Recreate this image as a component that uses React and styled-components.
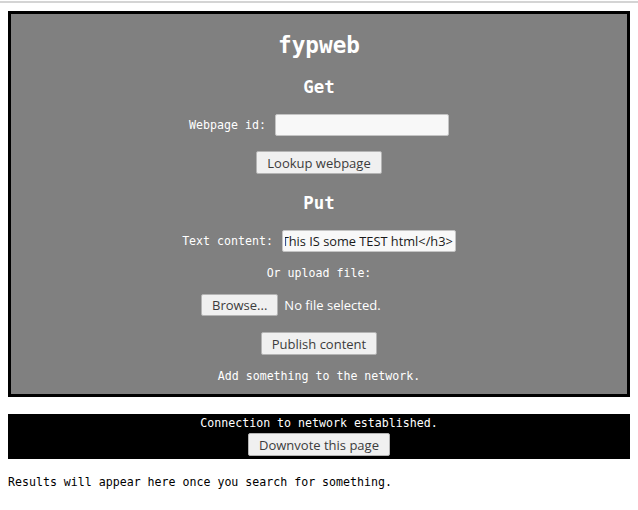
import React, { useEffect, useRef } from 'react';
import styled, { createGlobalStyle } from 'styled-components';

const GlobalStyle = createGlobalStyle`
    html, body {
        margin: 0;
        padding: 0;
        background: #fff;
    }
    body {
        font-family: "DejaVu Sans Mono", monospace;
        font-size: 11.6px;
        color: #000;
    }
`;

const TopRule = styled.div`
    margin-top: 1px;
    height: 2px;
    background: #d4d4d4;
`;

const Page = styled.div`
    padding: 8px 8px 0;
`;

const Panel = styled.div`
    border: 3px solid #000;
    background: #808080;
    color: #fff;
    display: flex;
    flex-direction: column;
    align-items: center;
    padding: 17px 0 11px;
`;

const Title = styled.h1`
    margin: 0;
    font-size: 22.7px;
    line-height: 28px;
    font-weight: bold;
`;

const Subtitle = styled.h2`
    margin: ${p => p.$top}px 0 0;
    font-size: 17.4px;
    line-height: 22px;
    font-weight: bold;
`;

const Row = styled.div`
    display: flex;
    align-items: center;
    gap: ${p => p.$gap || 9}px;
    margin-top: ${p => p.$top}px;
    height: 22px;
`;

const FileRow = styled(Row)`
    width: 236px;
    justify-content: flex-start;
`;

const Label = styled.span`
    line-height: 14px;
`;

const Line = styled.div`
    margin-top: ${p => p.$top}px;
    line-height: 14px;
`;

const TextInput = styled.input`
    box-sizing: border-box;
    width: 174px;
    height: 22px;
    padding: 0 2px;
    border: 1px solid #c4c4c4;
    border-radius: 2px;
    background: #f8f8f8;
    font-family: "Open Sans", sans-serif;
    font-size: 12.8px;
    color: #1a1a1a;
    outline: none;
`;

const Button = styled.button`
    box-sizing: border-box;
    height: ${p => p.$h || 23}px;
    margin-top: ${p => p.$top || 0}px;
    padding: 0 10px;
    border: 1px solid #b4b4b4;
    border-radius: 2px;
    background: #f0f0f0;
    color: #3c3c3c;
    font-family: "Open Sans", sans-serif;
    font-size: 13px;
    cursor: pointer;
`;

const FileNote = styled.span`
    font-family: "Open Sans", sans-serif;
    font-size: 13px;
    color: #fff;
`;

const StatusBar = styled.div`
    margin-top: 17px;
    background: #000;
    color: #fff;
    display: flex;
    flex-direction: column;
    align-items: center;
    padding: 2px 0 3px;
`;

const Results = styled.p`
    margin: 16px 0 0;
    line-height: 14px;
`;

export default function App() {
    const contentRef = useRef(null);

    useEffect(() => {
        const el = contentRef.current;
        if (el) {
            el.scrollLeft = el.scrollWidth;
        }
    }, []);

    return (
        <>
            <GlobalStyle />
            <TopRule />
            <Page>
                <Panel>
                    <Title>fypweb</Title>
                    <Subtitle $top={17}>Get</Subtitle>
                    <Row $top={16}>
                        <Label>Webpage id:</Label>
                        <TextInput type="text" />
                    </Row>
                    <Button $top={15}>Lookup webpage</Button>
                    <Subtitle $top={18}>Put</Subtitle>
                    <Row $top={16}>
                        <Label>Text content:</Label>
                        <TextInput
                            ref={contentRef}
                            type="text"
                            defaultValue="<h3>This IS some TEST html</h3>"
                        />
                    </Row>
                    <Line $top={14}>Or upload file:</Line>
                    <FileRow $top={14} $gap={6}>
                        <Button $h={22}>Browse...</Button>
                        <FileNote>No file selected.</FileNote>
                    </FileRow>
                    <Button $top={16}>Publish content</Button>
                    <Line $top={14}>Add something to the network.</Line>
                </Panel>
                <StatusBar>
                    <Line $top={0}>Connection to network established.</Line>
                    <Button $top={3}>Downvote this page</Button>
                </StatusBar>
                <Results>Results will appear here once you search for something.</Results>
            </Page>
        </>
    );
}
